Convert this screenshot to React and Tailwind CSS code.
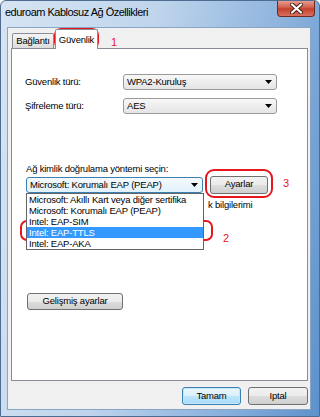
import React from 'react'

const btn = "flex items-center justify-center rounded-[3px] border border-[#707070] bg-[linear-gradient(#f2f2f2_0%,#ebebeb_50%,#dddddd_51%,#cfcfcf_100%)]"

const Arrow = () => (
  <svg width="7" height="4" viewBox="0 0 7 4">
    <path d="M0 0h7L3.5 4z" fill="#000" />
  </svg>
)

const Combo = ({ value, className = '', focused = false, children }) => (
  <div className={`relative ${className}`}>
    <div
      className={`flex h-[16px] items-center justify-between rounded-[3px] border pl-[3px] pr-[4px] ${
        focused
          ? 'border-[#3c7fb1] bg-[linear-gradient(#f4fafe,#e1f1fb)]'
          : 'border-[#9a9a9a] bg-[linear-gradient(#f8f8f8,#e4e4e4)]'
      }`}
    >
      <span className="leading-none">{value}</span>
      <Arrow />
    </div>
    {children}
  </div>
)

const Mark = ({ className }) => (
  <div className={`pointer-events-none absolute rounded-[7px] border-[2.5px] border-[#e8161d] ${className}`} />
)

export default function App() {
  // list shown open under the EAP combo
  const methods = [
    'Microsoft: Akıllı Kart veya diğer sertifika',
    'Microsoft: Korumalı EAP (PEAP)',
    'Intel: EAP-SIM',
    'Intel: EAP-TTLS',
    'Intel: EAP-AKA',
  ]

  return (
    <div className="relative flex h-[417px] w-[320px] flex-col overflow-hidden rounded-t-[6px] border border-[#4d6c8f] bg-[linear-gradient(100deg,#d6e4f3_0%,#bfd5ec_40%,#8ab1dc_75%,#5c91cb_100%)] font-['Liberation_Sans',Arial,sans-serif] text-[9.5px] tracking-[-0.2px] text-black">
      {/* title bar */}
      <div className="flex h-[26px] shrink-0 items-start justify-between">
        <span className="pl-[4px] pt-[6px] text-[11px] leading-none tracking-[-0.5px]">eduroam Kablosuz Ağ Özellikleri</span>
        <div className="-mt-px mr-[4px] flex h-[17px] w-[38px] items-center justify-center rounded-b-[4px] border border-t-0 border-[#6e2b22] bg-[linear-gradient(#e9a79a_0%,#d2614f_45%,#c2402c_55%,#d87060_100%)]">
          <svg width="13" height="11" viewBox="0 0 13 11">
            <path d="M2 1.5l9 8M11 1.5l-9 8" stroke="#4a1d16" strokeWidth="4" strokeLinecap="round" />
            <path d="M2 1.5l9 8M11 1.5l-9 8" stroke="#fff" strokeWidth="2.2" strokeLinecap="round" />
          </svg>
        </div>
      </div>

      {/* client area */}
      <div className="ml-[6px] mr-[8px] flex h-[383px] flex-col border border-[#8aa5c4] bg-[#f0f0f0] pl-[3px] pr-[2px]">
        {/* tabs */}
        <div className="relative z-10 flex h-[21px] items-end pt-[1px]">
          <div className="mb-[1px] ml-[1px] flex h-[15px] w-[42px] items-center justify-center rounded-t-[2px] border border-b-0 border-[#898c95] bg-[linear-gradient(#f5f5f5,#dcdcdc)]">
            Bağlantı
          </div>
          <div className="ml-[1px] flex h-[20px] w-[43px] items-start justify-center rounded-t-[2px] border border-b-0 border-[#898c95] bg-white pt-[3px]">
            Güvenlik
          </div>
        </div>

        {/* tab page */}
        <div className="-mt-px flex h-[333px] flex-col border border-[#898c95] bg-white">
          <div className="mt-[25px] flex items-center pl-[13px]">
            <span className="w-[98px]">Güvenlik türü:</span>
            <Combo value="WPA2-Kuruluş" className="w-[154px]" />
          </div>
          <div className="mt-[8px] flex items-center pl-[13px]">
            <span className="w-[98px]">Şifreleme türü:</span>
            <Combo value="AES" className="w-[154px]" />
          </div>

          <div className="mt-[49px] h-[12px] pl-[14px] leading-[12px]">Ağ kimlik doğrulama yöntemi seçin:</div>
          <div className="flex h-[19px] items-center gap-[7px] pl-[14px]">
            <Combo value="Microsoft: Korumalı EAP (PEAP)" className="z-20 w-[177px]" focused>
              <div className="absolute left-0 top-full w-[178px] border border-[#646464] bg-white">
                {methods.map((m) => (
                  <div
                    key={m}
                    className={`h-[11px] whitespace-nowrap pl-[2px] leading-[11px] ${
                      m === 'Intel: EAP-TTLS' ? 'bg-[#3399ff] text-white' : ''
                    }`}
                  >
                    {m}
                  </div>
                ))}
              </div>
            </Combo>
            <div className={`${btn} h-[18px] w-[58px]`}>Ayarlar</div>
          </div>

          {/* tail of the checkbox label, the rest sits behind the open list */}
          <div className="ml-[196px] mt-[5px] h-[12px] leading-[12px] whitespace-nowrap">k bilgilerimi</div>

          <div className={`${btn} ml-[15px] mt-[82px] h-[17px] w-[96px]`}>Gelişmiş ayarlar</div>
        </div>

        {/* dialog buttons */}
        <div className="mt-[6px] flex justify-end gap-[7px]">
          <div className="flex h-[18px] w-[59px] items-center justify-center rounded-[3px] border border-[#3c7fb1] bg-[linear-gradient(#eaf6fd_0%,#d9f0fc_50%,#bee6fd_51%,#a7d9f5_100%)] shadow-[inset_0_0_0_1px_#c4e8fb]">
            Tamam
          </div>
          <div className={`${btn} h-[18px] w-[60px]`}>Iptal</div>
        </div>
      </div>

      {/* red annotations */}
      <Mark className="left-[53px] top-[27px] h-[21px] w-[45px] rounded-[6px]" />
      <span className="absolute left-[110px] top-[36px] text-[11px] leading-none text-[#e8161d]">1</span>
      <Mark className="left-[204px] top-[168px] h-[29px] w-[68px] rounded-[9px]" />
      <span className="absolute left-[282px] top-[177px] text-[11px] leading-none text-[#e8161d]">3</span>
      <Mark className="left-[19px] top-[219px] h-[21px] w-[193px]" />
      <span className="absolute left-[222px] top-[232px] text-[11px] leading-none text-[#e8161d]">2</span>
    </div>
  )
}
